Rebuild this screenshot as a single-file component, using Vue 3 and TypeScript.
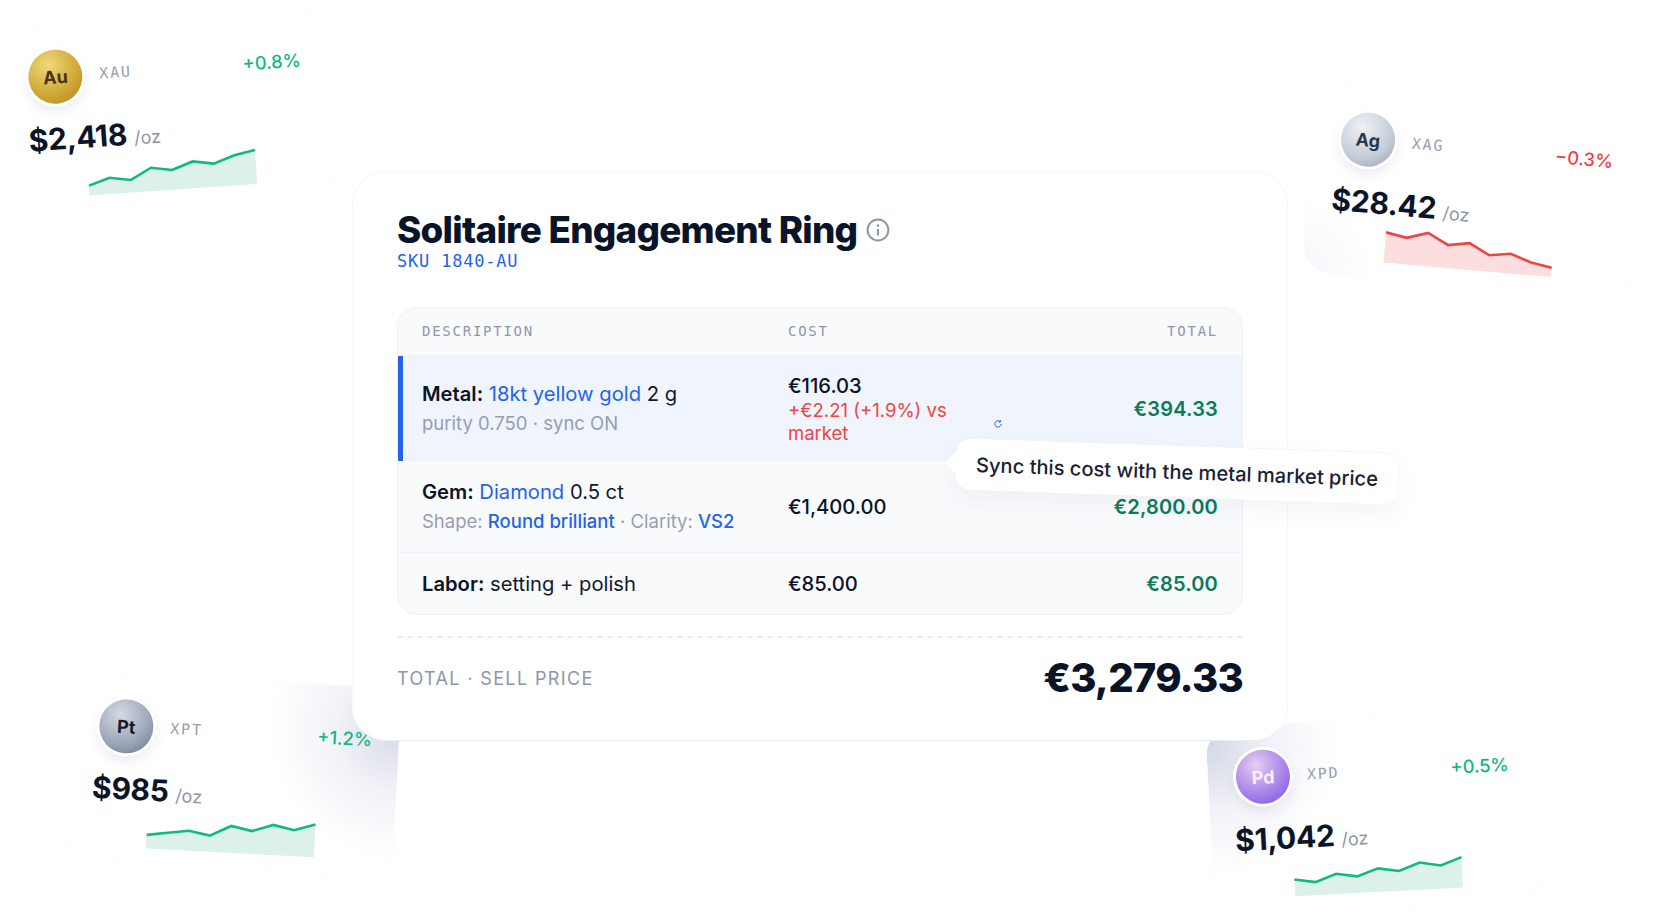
<script setup lang="ts">
interface Metal {
  id: string
  symbol: string
  ticker: string
  change: string
  price: string
  line: number[]
}

const metals: Metal[] = [
  { id: 'au', symbol: 'Au', ticker: 'XAU', change: '+0.8%', price: '$2,418', line: [30, 23.6, 27.3, 16.5, 20.2, 13.1, 16.8, 9.8, 6.1] },
  { id: 'ag', symbol: 'Ag', ticker: 'XAG', change: '−0.3%', price: '$28.42', line: [9.8, 13.4, 6.7, 17, 13.3, 23.6, 20.2, 27.2, 30.7] },
  { id: 'pt', symbol: 'Pt', ticker: 'XPT', change: '+1.2%', price: '$985', line: [26.3, 23, 20, 23.7, 13, 17, 9.7, 14, 7] },
  { id: 'pd', symbol: 'Pd', ticker: 'XPD', change: '+0.5%', price: '$1,042', line: [23.3, 27, 19.7, 23.4, 16.5, 20.2, 12.8, 16.9, 9.6] },
]

const points = (line: number[]) => line.map((y, i) => `${i * 21},${y}`).join(' ')
const area = (line: number[]) => `0,40 ${points(line)} 168,40`
</script>

<template>
  <div class="page">
    <div v-for="m in metals" :key="m.id" class="metal" :class="'m-' + m.id">
      <div class="metal-head">
        <span class="coin">{{ m.symbol }}</span>
        <span class="ticker">{{ m.ticker }}</span>
        <span class="change">{{ m.change }}</span>
      </div>
      <div class="price">{{ m.price }} <small>/oz</small></div>
      <svg class="spark" viewBox="0 0 168 40" width="168" height="40">
        <polygon class="spark-fill" :points="area(m.line)" />
        <polyline class="spark-line" :points="points(m.line)" />
      </svg>
    </div>

    <section class="card">
      <div class="title-row">
        <h1>Solitaire Engagement Ring</h1>
        <svg class="info" viewBox="0 0 24 24" width="24" height="24" fill="none">
          <circle cx="12" cy="12" r="10.4" stroke="#8e96aa" stroke-width="2" />
          <path d="M12 11v6.4" stroke="#8e96aa" stroke-width="2" />
          <circle cx="12" cy="7.6" r="1.3" fill="#8e96aa" />
        </svg>
      </div>
      <div class="sku">SKU 1840-AU</div>

      <div class="table">
        <div class="row head">
          <span>DESCRIPTION</span>
          <span>COST</span>
          <span></span>
          <span class="right">TOTAL</span>
        </div>
        <div class="row active">
          <div>
            <div class="main"><b>Metal:</b> <a>18kt yellow gold</a> 2 g</div>
            <div class="sub">purity 0.750 · sync ON</div>
          </div>
          <div>
            <div class="cost">€116.03</div>
            <div class="delta">+€2.21 (+1.9%) vs market</div>
          </div>
          <svg class="sync" viewBox="0 0 10 10" width="10" height="10" fill="none">
            <path d="M8.2 5a3.2 3.2 0 1 1-1-2.4" stroke="#2563eb" stroke-width="1" />
            <path d="M7.4 1.2v1.8H5.6" stroke="#2563eb" stroke-width="1" />
          </svg>
          <div class="total right">€394.33</div>
        </div>
        <div class="row">
          <div>
            <div class="main"><b>Gem:</b> <a>Diamond</a> 0.5 ct</div>
            <div class="sub">Shape: <a>Round brilliant</a> · Clarity: <a>VS2</a></div>
          </div>
          <div class="cost">€1,400.00</div>
          <span></span>
          <div class="total right">€2,800.00</div>
        </div>
        <div class="row">
          <div class="main"><b>Labor:</b> setting + polish</div>
          <div class="cost">€85.00</div>
          <span></span>
          <div class="total right">€85.00</div>
        </div>
      </div>

      <div class="summary">
        <span class="summary-label">TOTAL · SELL PRICE</span>
        <span class="summary-value">€3,279.33</span>
      </div>

      <div class="tooltip">Sync this cost with the metal market price</div>
    </section>
  </div>
</template>

<style>
html,
body {
  background: #fff;
}
</style>

<style scoped>
.page {
  position: relative;
  width: 1654px;
  height: 918px;
  overflow: hidden;
  padding: 171px 0 0 352px;
  box-sizing: border-box;
  background: #fff;
  font-family: Inter, "Liberation Sans", sans-serif;
  color: #0b1428;
}

/* floating metal tickers */
.metal {
  position: absolute;
  width: 330px;
  height: 190px;
  box-sizing: border-box;
  padding: 25px 27px 0 28px;
  border: 1px solid #fbfcfd;
  border-radius: 30px;
  background: #fff;
}
.m-au { left: 2px; top: 16px; transform: rotate(-4deg); }
.m-ag {
  left: 1308px; top: 96px; transform: rotate(5deg);
  background: radial-gradient(circle 70px at 0% 100%, #f6f7fb, #fff);
}
.m-pt {
  left: 68px; top: 679px; transform: rotate(3deg);
  background: radial-gradient(circle 130px at 100% 22%, #d6dae7, #f2f3f8 50%, #fff);
}
.m-pd {
  left: 1209px; top: 718px; transform: rotate(-3deg);
  background: radial-gradient(circle 130px at 0% 10%, #d3d7e5, #f2f3f8 50%, #fff);
}

.metal-head {
  display: flex;
  align-items: center;
  gap: 17px;
}
.coin {
  flex: none;
  width: 54px;
  height: 54px;
  border-radius: 50%;
  display: flex;
  align-items: center;
  justify-content: center;
  font-size: 18px;
  font-weight: 700;
  box-shadow: 0 0 0 3px #fff, 0 6px 14px rgba(40, 50, 90, 0.12);
}
.m-au .coin { color: #4b3209; background: radial-gradient(circle at 38% 28%, #f0d978, #cda535 60%, #ab861f); }
.m-ag .coin { color: #2c374d; background: radial-gradient(circle at 38% 28%, #eef1f5, #c5ccd8 60%, #8f9cb0); }
.m-pt .coin { color: #141d30; background: radial-gradient(circle at 38% 28%, #d5dae3, #9aa4b6 60%, #667188); }
.m-pd .coin { color: #f6eefe; background: radial-gradient(circle at 38% 28%, #e7cdf0, #a885ea 55%, #7a4fe0); }

.ticker {
  font-family: "DejaVu Sans Mono", monospace;
  font-size: 15px;
  letter-spacing: 0.12em;
  color: #969eb2;
}
.change {
  margin-left: auto;
  font-size: 18.3px;
  font-weight: 500;
  color: #10b981;
}
.m-ag .change { color: #ef4444; }

.price {
  margin: 17px 0 0 -4px;
  font-size: 30px;
  line-height: 36px;
  font-weight: 700;
  letter-spacing: -0.01em;
}
.price small {
  font-size: 18px;
  font-weight: 400;
  letter-spacing: 0;
  color: #8e96aa;
}
.spark {
  display: block;
  margin: -4px auto 0;
  overflow: visible;
}
.spark-fill { fill: #dcf2e9; }
.spark-line { fill: none; stroke: #10b981; stroke-width: 2.6; }
.m-ag .spark-fill { fill: #fddede; }
.m-ag .spark-line { stroke: #ef4444; }

/* main cost card */
.card {
  position: relative;
  z-index: 2;
  width: 936px;
  box-sizing: border-box;
  padding: 36px 44px 38px;
  border: 1px solid #f6f7fb;
  border-bottom-color: #e9edf5;
  border-radius: 34px;
  background: #fff;
}
.title-row {
  display: flex;
  align-items: center;
  gap: 9px;
}
h1 {
  margin: 0;
  font-size: 36.8px;
  line-height: 44px;
  font-weight: 800;
  letter-spacing: -0.02em;
  color: #0a1429;
}
.sku {
  margin-top: -1px;
  font-family: "DejaVu Sans Mono", monospace;
  font-size: 17px;
  line-height: 20px;
  letter-spacing: 0.8px;
  color: #2563eb;
}

.table {
  margin-top: 36px;
  border: 1px solid #f0f2f7;
  border-radius: 20px;
  overflow: hidden;
  background: #f9fafc;
}
.row {
  display: grid;
  grid-template-columns: 366px 200px 14px 1fr;
  column-gap: 0;
  align-items: center;
  padding: 16px 24px;
  border-bottom: 1px solid #f0f2f7;
}
.row:last-child { border-bottom: 0; }
.right { text-align: right; }
.head {
  padding: 14px 24px;
  font-family: "DejaVu Sans Mono", monospace;
  font-size: 14px;
  line-height: 19px;
  letter-spacing: 1.75px;
  color: #8e96aa;
}
.active {
  padding-left: 19px;
  border-left: 5px solid #2563eb;
  background: #eff4fd;
  border-bottom: 0;
}
.main {
  font-size: 20.2px;
  line-height: 29px;
  color: #111a2e;
}
.main b { font-weight: 600; color: #0b1428; }
.sub {
  font-size: 18.5px;
  line-height: 30px;
  color: #969eb2;
}
a { color: #2563eb; }
.sub a { font-weight: 500; }
.cost {
  font-size: 20.2px;
  line-height: 27px;
  font-weight: 500;
}
.delta {
  font-size: 18.5px;
  line-height: 23px;
  color: #ef4444;
}
.sync {
  align-self: center;
  margin: 30px 0 0 5px;
}
.total {
  font-size: 20px;
  font-weight: 600;
  letter-spacing: 0.01em;
  color: #0b7c57;
}

.summary {
  margin-top: 21px;
  padding-top: 16px;
  border-top: 2px dashed #e9eef6;
  display: flex;
  align-items: center;
  justify-content: space-between;
}
.summary-label {
  font-size: 18px;
  letter-spacing: 0.076em;
  color: #8e96aa;
}
.summary-value {
  font-size: 40px;
  line-height: 48px;
  font-weight: 800;
  letter-spacing: -0.02em;
  color: #0a1429;
}

.tooltip {
  position: absolute;
  left: 603px;
  top: 273px;
  width: 442px;
  height: 52px;
  box-sizing: border-box;
  padding: 0 20px;
  display: flex;
  align-items: center;
  white-space: nowrap;
  font-size: 20.1px;
  font-weight: 500;
  color: #182136;
  background: #fff;
  border-radius: 14px;
  border-top: 1px solid #eef2f9;
  box-shadow: 0 10px 22px rgba(40, 50, 90, 0.05);
  transform: rotate(2deg);
}
.tooltip::before {
  content: "";
  position: absolute;
  left: -8px;
  top: 16px;
  width: 16px;
  height: 16px;
  background: #fff;
  transform: rotate(45deg);
  border-radius: 2px;
}
</style>
